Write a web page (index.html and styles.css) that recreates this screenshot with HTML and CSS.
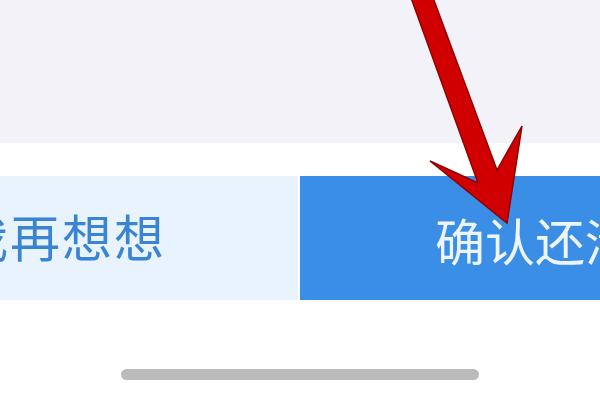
FILE: index.html
```html
<!DOCTYPE html>
<html lang="zh">
<head>
<meta charset="utf-8">
<link rel="stylesheet" href="styles.css">
</head>
<body>
<div class="screen">
  <div class="top"></div>
  <div class="spacer"></div>
  <div class="actions">
    <div class="btn btn-cancel"><span>让我再想想</span></div>
    <div class="btn btn-confirm"><span>确认还清</span></div>
  </div>
  <div class="bottom">
    <div class="home-bar"></div>
  </div>
  <svg class="arrow" width="600" height="400" viewBox="0 0 600 400">
    <polygon points="410,-5 432,-5 497,170 522,126 507,223 430,161 478,183" fill="#d00000" stroke="#900000" stroke-width="1.5" stroke-linejoin="miter"/>
  </svg>
</div>
</body>
</html>
```

FILE: styles.css
```css
html, body {
  margin: 0;
  padding: 0;
  background: #ffffff;
}
.screen {
  position: relative;
  width: 600px;
  height: 400px;
  overflow: hidden;
  display: flex;
  flex-direction: column;
  font-family: "Noto Sans CJK SC", "Noto Sans", sans-serif;
}
.top {
  height: 143px;
  background: #f3f2f8;
}
.spacer {
  height: 33px;
  background: #ffffff;
}
.actions {
  height: 124px;
  display: flex;
  gap: 2px;
  background: #ffffff;
}
.btn {
  display: flex;
  align-items: center;
  overflow: hidden;
  white-space: nowrap;
  font-size: 50px;
  line-height: 1;
  box-sizing: border-box;
}
.btn-cancel {
  width: 298px;
  background: #e8f3fe;
  color: #3a84d4;
  justify-content: flex-end;
  padding-right: 132px;
  padding-bottom: 6px;
}
.btn-cancel span {
  letter-spacing: 2px;
}
.btn-confirm {
  flex: 1;
  background: #3a8ee6;
  color: #eef4fc;
  padding-left: 135px;
  padding-top: 2px;
}
.bottom {
  flex: 1;
  display: flex;
  justify-content: center;
  padding-top: 69px;
  box-sizing: border-box;
}
.home-bar {
  width: 358px;
  height: 11px;
  border-radius: 6px;
  background: #bbbbbb;
}
.arrow {
  position: absolute;
  left: 0;
  top: 0;
}
```
